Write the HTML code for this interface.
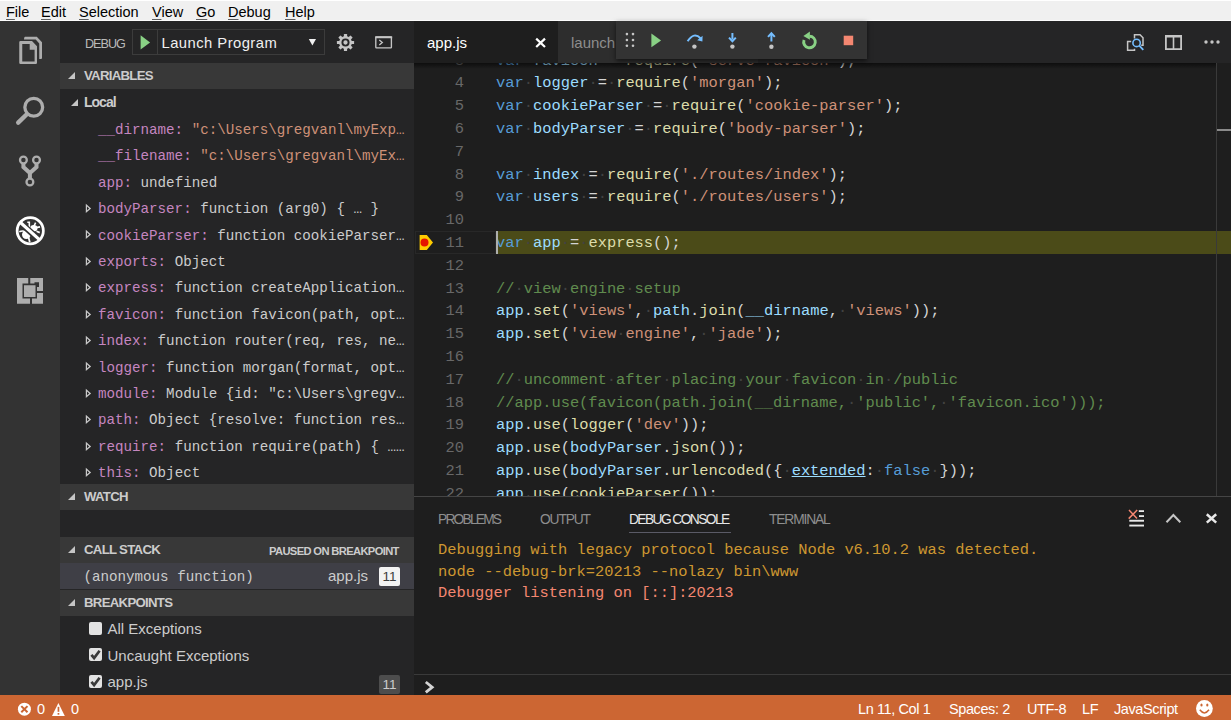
<!DOCTYPE html>
<html><head><meta charset="utf-8">
<style>
*{margin:0;padding:0;box-sizing:border-box}
html,body{width:1231px;height:720px;overflow:hidden;background:#1e1e1e;font-family:"Liberation Sans",sans-serif;position:relative}
.a{position:absolute}
#menubar{position:absolute;left:0;top:0;width:1231px;height:21px;background:#f0f0f0;border-top:1px solid #fff;border-bottom:1px solid #fcfcfc}
#menubar span{position:absolute;top:3px;font-size:14.5px;color:#000;line-height:17px;white-space:nowrap}
#menubar u{text-decoration:underline;text-decoration-thickness:1px;text-underline-offset:1.5px;text-decoration-color:#606060}
#activity{position:absolute;left:0;top:21px;width:60px;height:674px;background:#333333}
#activity svg{position:absolute}
#sidebar{position:absolute;left:60px;top:21px;width:354px;height:674px;background:#252526;overflow:hidden}
.dbghead{position:absolute;left:0;top:0;width:354px;height:42px}
.shead{position:absolute;left:0;width:354px;height:26.4px;background:#383838;color:#cccccc;font-weight:bold;font-size:13.2px}
.shead .t{position:absolute;left:24px;top:5px;line-height:16px;white-space:nowrap;letter-spacing:-0.7px}
.tri{position:absolute;left:8px;top:9px;width:0;height:0;border-left:7px solid transparent;border-bottom:7px solid #c5c5c5}
.row{position:absolute;left:0;width:354px;height:26.4px;font-family:"Liberation Mono",monospace;font-size:14.2px;color:#cccccc;white-space:pre}
.row .t{position:absolute;top:6.3px;line-height:16px}
.nm{color:#c586c0}.str{color:#ce9178}
.chev{position:absolute;left:25px;top:8px;width:8px;height:12px}
#editor{position:absolute;left:414px;top:21px;width:817px;height:674px;background:#1e1e1e;overflow:hidden}
#tabs{position:absolute;left:0;top:0;width:817px;height:42px;background:#252526}
.code{position:absolute;left:0;top:42px;width:817px;height:433px;overflow:hidden}
.ln{position:absolute;left:0;width:817px;height:22.8px;font-family:"Liberation Mono",monospace;font-size:15.4px;line-height:22.8px;white-space:pre;color:#d4d4d4}
.ln .n{position:absolute;right:767px;top:1px;color:#686868}
.ln .c{position:absolute;left:82px;top:1px}
.k{color:#569cd6}.v{color:#9cdcfe}.f{color:#dcdcaa}.s{color:#ce9178}.cm{color:#608b4e}.w{color:#424242}
.u{color:#9cdcfe;text-decoration:underline}
.curline{position:absolute;left:82px;width:735px;height:22.8px;background:#4b4b18}
.curgut{position:absolute;left:1px;width:81px;height:22.8px;border:1.5px solid #282828}
.cursor{position:absolute;left:82px;width:2px;height:22.8px;background:#aeafad}
.bp{position:absolute;left:6px;margin-top:5px;width:13px;height:13px}
#panel{position:absolute;left:0;top:475px;width:817px;height:199px;background:#1e1e1e;border-top:1px solid #454545}
#status{position:absolute;left:0;top:695px;width:1231px;height:25px;background:#cc6633;color:#fff;font-size:14.5px;letter-spacing:-0.4px}
#status span{position:absolute;top:6px;line-height:16px;white-space:nowrap}

.ui{font-family:"Liberation Sans",sans-serif;font-size:15px;color:#cccccc}
.row.ui .t{line-height:17px}
.cb{position:absolute;left:29px;width:13px;height:13px;background:#e3e3e3;border-radius:2px}
.cb svg{position:absolute;left:0;top:0}
.ptab{position:absolute;top:14.5px;font-size:13.8px;letter-spacing:-1.15px;line-height:16px;color:#8e8e8e;white-space:nowrap}
.ptab.act{color:#e7e7e7}
.con{position:absolute;left:24px;font-family:"Liberation Mono",monospace;font-size:15.4px;line-height:21.5px;white-space:pre}
.codeshadow{position:absolute;left:0;top:42px;width:802px;height:6px;background:linear-gradient(rgba(0,0,0,.55),rgba(0,0,0,0))}
#debugtb{position:absolute;left:616px;top:21px;width:251px;height:37.5px;background:#333333;box-shadow:0 2px 5px rgba(0,0,0,.6)}

</style></head><body>
<div id="menubar">
<span style="left:6px"><u>F</u>ile</span>
<span style="left:41px"><u>E</u>dit</span>
<span style="left:79px"><u>S</u>election</span>
<span style="left:152px"><u>V</u>iew</span>
<span style="left:196px"><u>G</u>o</span>
<span style="left:228px"><u>D</u>ebug</span>
<span style="left:285px"><u>H</u>elp</span>
</div>
<div id="activity"></div>
<div id="sidebar">
 <div class="dbghead">
  <div class="a" style="left:25px;top:16px;font-size:12.6px;line-height:14px;color:#bbbbbb;letter-spacing:-1px">DEBUG</div>
  <div class="a" style="left:72px;top:8px;width:193px;height:26px;border:1px solid #3c3c3c"></div>
  <div class="a" style="left:97px;top:8px;width:1px;height:26px;background:#3c3c3c"></div>
  <div class="a" style="left:101.5px;top:14.4px;font-size:14.8px;letter-spacing:0.45px;line-height:17px;color:#f0f0f0;white-space:nowrap">Launch Program</div>
 </div>
 <div class="shead" style="top:42px"><div class="tri"></div><div class="t">VARIABLES</div></div>
 <div class="row" style="top:68.4px;font-family:'Liberation Sans',sans-serif;font-weight:bold;font-size:14px"><div class="tri" style="left:11px;top:9.5px;border-left-width:7.2px;border-bottom-width:7.2px"></div><div class="t" style="left:24px;top:4.5px;letter-spacing:-1px">Local</div></div>
 <div class="row" style="top:94.8px"><div class="t" style="left:38px"><span class="nm">__dirname:</span> <span class="str">"c:\Users\gregvanl\myExp…</span></div></div>
 <div class="row" style="top:121.2px"><div class="t" style="left:38px"><span class="nm">__filename:</span> <span class="str">"c:\Users\gregvanl\myEx…</span></div></div>
 <div class="row" style="top:147.6px"><div class="t" style="left:38px"><span class="nm">app:</span> undefined</div></div>
 <div class="row" style="top:174px"><svg class="chev" viewBox="0 0 8 12"><path d="M0.8 0.8 L6.1 5.45 L0.8 10.1 Z M2 3.6 V7.3 L4.1 5.45 Z" fill="#c8c8c8" fill-rule="evenodd"/></svg><div class="t" style="left:38px"><span class="nm">bodyParser:</span> function (arg0) { … }</div></div>
 <div class="row" style="top:200.4px"><svg class="chev" viewBox="0 0 8 12"><path d="M0.8 0.8 L6.1 5.45 L0.8 10.1 Z M2 3.6 V7.3 L4.1 5.45 Z" fill="#c8c8c8" fill-rule="evenodd"/></svg><div class="t" style="left:38px"><span class="nm">cookieParser:</span> function cookieParser…</div></div>
 <div class="row" style="top:226.8px"><svg class="chev" viewBox="0 0 8 12"><path d="M0.8 0.8 L6.1 5.45 L0.8 10.1 Z M2 3.6 V7.3 L4.1 5.45 Z" fill="#c8c8c8" fill-rule="evenodd"/></svg><div class="t" style="left:38px"><span class="nm">exports:</span> Object</div></div>
 <div class="row" style="top:253.2px"><svg class="chev" viewBox="0 0 8 12"><path d="M0.8 0.8 L6.1 5.45 L0.8 10.1 Z M2 3.6 V7.3 L4.1 5.45 Z" fill="#c8c8c8" fill-rule="evenodd"/></svg><div class="t" style="left:38px"><span class="nm">express:</span> function createApplication…</div></div>
 <div class="row" style="top:279.6px"><svg class="chev" viewBox="0 0 8 12"><path d="M0.8 0.8 L6.1 5.45 L0.8 10.1 Z M2 3.6 V7.3 L4.1 5.45 Z" fill="#c8c8c8" fill-rule="evenodd"/></svg><div class="t" style="left:38px"><span class="nm">favicon:</span> function favicon(path, opt…</div></div>
 <div class="row" style="top:306px"><svg class="chev" viewBox="0 0 8 12"><path d="M0.8 0.8 L6.1 5.45 L0.8 10.1 Z M2 3.6 V7.3 L4.1 5.45 Z" fill="#c8c8c8" fill-rule="evenodd"/></svg><div class="t" style="left:38px"><span class="nm">index:</span> function router(req, res, ne…</div></div>
 <div class="row" style="top:332.4px"><svg class="chev" viewBox="0 0 8 12"><path d="M0.8 0.8 L6.1 5.45 L0.8 10.1 Z M2 3.6 V7.3 L4.1 5.45 Z" fill="#c8c8c8" fill-rule="evenodd"/></svg><div class="t" style="left:38px"><span class="nm">logger:</span> function morgan(format, opt…</div></div>
 <div class="row" style="top:358.8px"><svg class="chev" viewBox="0 0 8 12"><path d="M0.8 0.8 L6.1 5.45 L0.8 10.1 Z M2 3.6 V7.3 L4.1 5.45 Z" fill="#c8c8c8" fill-rule="evenodd"/></svg><div class="t" style="left:38px"><span class="nm">module:</span> Module {id: "c:\Users\gregv…</div></div>
 <div class="row" style="top:385.2px"><svg class="chev" viewBox="0 0 8 12"><path d="M0.8 0.8 L6.1 5.45 L0.8 10.1 Z M2 3.6 V7.3 L4.1 5.45 Z" fill="#c8c8c8" fill-rule="evenodd"/></svg><div class="t" style="left:38px"><span class="nm">path:</span> Object {resolve: function res…</div></div>
 <div class="row" style="top:411.6px"><svg class="chev" viewBox="0 0 8 12"><path d="M0.8 0.8 L6.1 5.45 L0.8 10.1 Z M2 3.6 V7.3 L4.1 5.45 Z" fill="#c8c8c8" fill-rule="evenodd"/></svg><div class="t" style="left:38px"><span class="nm">require:</span> function require(path) { ……</div></div>
 <div class="row" style="top:438px"><svg class="chev" viewBox="0 0 8 12"><path d="M0.8 0.8 L6.1 5.45 L0.8 10.1 Z M2 3.6 V7.3 L4.1 5.45 Z" fill="#c8c8c8" fill-rule="evenodd"/></svg><div class="t" style="left:38px"><span class="nm">this:</span> Object</div></div>
 <div class="shead" style="top:463px"><div class="tri"></div><div class="t">WATCH</div></div>
 <div class="shead" style="top:516px"><div class="tri"></div><div class="t">CALL STACK</div><div class="a" style="left:209px;top:7px;font-size:11.2px;line-height:14px;white-space:nowrap;letter-spacing:-0.65px">PAUSED ON BREAKPOINT</div></div>
 <div class="row" style="top:542px;background:#3f3f46"><div class="t" style="left:23.5px">(anonymous function)</div>
   <div class="a ui" style="left:268px;top:4px;font-size:15px;line-height:17px">app.js</div>
   <div class="a ui badge" style="left:319px;top:4px;width:21px;height:19px;background:#f2f2f2;color:#3c3c3c;font-size:13.5px;line-height:19px;text-align:center;border-radius:2px">11</div>
 </div>
 <div class="shead" style="top:569px"><div class="tri"></div><div class="t">BREAKPOINTS</div></div>
 <div class="row ui" style="top:595px"><div class="cb" style="top:5.5px"></div><div class="t" style="left:47.5px;top:4px">All Exceptions</div></div>
 <div class="row ui" style="top:621.5px"><div class="cb" style="top:5.5px"><svg width="13" height="13"><path d="M2.4 6.9 L5.1 10 L10.6 2.8" stroke="#3a3a3a" stroke-width="2.7" fill="none"/></svg></div><div class="t" style="left:47.5px;top:4px">Uncaught Exceptions</div></div>
 <div class="row ui" style="top:648px"><div class="cb" style="top:5.5px"><svg width="13" height="13"><path d="M2.4 6.9 L5.1 10 L10.6 2.8" stroke="#3a3a3a" stroke-width="2.7" fill="none"/></svg></div><div class="t" style="left:47.5px;top:4px">app.js</div>
   <div class="a badge" style="left:319px;top:6px;width:21px;height:19px;background:#4d4d4d;color:#cccccc;font-size:13.5px;line-height:19px;text-align:center;border-radius:2px">11</div></div>
</div>
<div id="editor">
 <div id="tabs">
  <div class="a" style="left:0;top:0;width:144px;height:42px;background:#1e1e1e"></div>
  <div class="a" style="left:13px;top:13px;font-size:15px;line-height:17px;color:#ffffff">app.js</div>
  <div class="a" style="left:144px;top:0;width:200px;height:42px;background:#2d2d2d"></div>
  <div class="a" style="left:157px;top:13px;font-size:15px;line-height:17px;color:#8e8e8e">launch.json</div>
 </div>
 <div class="code">
<div class="curline" style="top:168.00px"></div>
<div class="curgut" style="top:168.00px"></div>
<div class="ln" style="top:-14.40px"><span class="n">3</span><span class="c"><span class="k">var</span><span class="w">·</span><span class="v">favicon</span><span class="w">·</span>=<span class="w">·</span><span class="f">require</span>(<span class="s">&#x27;serve-favicon&#x27;</span>);</span></div>
<div class="ln" style="top:8.40px"><span class="n">4</span><span class="c"><span class="k">var</span><span class="w">·</span><span class="v">logger</span><span class="w">·</span>=<span class="w">·</span><span class="f">require</span>(<span class="s">&#x27;morgan&#x27;</span>);</span></div>
<div class="ln" style="top:31.20px"><span class="n">5</span><span class="c"><span class="k">var</span><span class="w">·</span><span class="v">cookieParser</span><span class="w">·</span>=<span class="w">·</span><span class="f">require</span>(<span class="s">&#x27;cookie-parser&#x27;</span>);</span></div>
<div class="ln" style="top:54.00px"><span class="n">6</span><span class="c"><span class="k">var</span><span class="w">·</span><span class="v">bodyParser</span><span class="w">·</span>=<span class="w">·</span><span class="f">require</span>(<span class="s">&#x27;body-parser&#x27;</span>);</span></div>
<div class="ln" style="top:76.80px"><span class="n">7</span><span class="c"></span></div>
<div class="ln" style="top:99.60px"><span class="n">8</span><span class="c"><span class="k">var</span><span class="w">·</span><span class="v">index</span><span class="w">·</span>=<span class="w">·</span><span class="f">require</span>(<span class="s">&#x27;./routes/index&#x27;</span>);</span></div>
<div class="ln" style="top:122.40px"><span class="n">9</span><span class="c"><span class="k">var</span><span class="w">·</span><span class="v">users</span><span class="w">·</span>=<span class="w">·</span><span class="f">require</span>(<span class="s">&#x27;./routes/users&#x27;</span>);</span></div>
<div class="ln" style="top:145.20px"><span class="n">10</span><span class="c"></span></div>
<div class="ln" style="top:168.00px"><span class="n">11</span><span class="c"><span class="k">var</span><span class="w">·</span><span class="v">app</span><span class="w">·</span>=<span class="w">·</span><span class="f">express</span>();</span></div>
<div class="ln" style="top:190.80px"><span class="n">12</span><span class="c"></span></div>
<div class="ln" style="top:213.60px"><span class="n">13</span><span class="c"><span class="cm">//</span><span class="w">·</span><span class="cm">view</span><span class="w">·</span><span class="cm">engine</span><span class="w">·</span><span class="cm">setup</span></span></div>
<div class="ln" style="top:236.40px"><span class="n">14</span><span class="c"><span class="v">app</span>.<span class="f">set</span>(<span class="s">&#x27;views&#x27;</span>,<span class="w">·</span><span class="v">path</span>.<span class="f">join</span>(<span class="v">__dirname</span>,<span class="w">·</span><span class="s">&#x27;views&#x27;</span>));</span></div>
<div class="ln" style="top:259.20px"><span class="n">15</span><span class="c"><span class="v">app</span>.<span class="f">set</span>(<span class="s">&#x27;view</span><span class="w">·</span><span class="s">engine&#x27;</span>,<span class="w">·</span><span class="s">&#x27;jade&#x27;</span>);</span></div>
<div class="ln" style="top:282.00px"><span class="n">16</span><span class="c"></span></div>
<div class="ln" style="top:304.80px"><span class="n">17</span><span class="c"><span class="cm">//</span><span class="w">·</span><span class="cm">uncomment</span><span class="w">·</span><span class="cm">after</span><span class="w">·</span><span class="cm">placing</span><span class="w">·</span><span class="cm">your</span><span class="w">·</span><span class="cm">favicon</span><span class="w">·</span><span class="cm">in</span><span class="w">·</span><span class="cm">/public</span></span></div>
<div class="ln" style="top:327.60px"><span class="n">18</span><span class="c"><span class="cm">//app.use(favicon(path.join(__dirname,</span><span class="w">·</span><span class="cm">&#x27;public&#x27;,</span><span class="w">·</span><span class="cm">&#x27;favicon.ico&#x27;)));</span></span></div>
<div class="ln" style="top:350.40px"><span class="n">19</span><span class="c"><span class="v">app</span>.<span class="f">use</span>(<span class="f">logger</span>(<span class="s">&#x27;dev&#x27;</span>));</span></div>
<div class="ln" style="top:373.20px"><span class="n">20</span><span class="c"><span class="v">app</span>.<span class="f">use</span>(<span class="v">bodyParser</span>.<span class="f">json</span>());</span></div>
<div class="ln" style="top:396.00px"><span class="n">21</span><span class="c"><span class="v">app</span>.<span class="f">use</span>(<span class="v">bodyParser</span>.<span class="f">urlencoded</span>({<span class="w">·</span><span class="u">extended</span>:<span class="w">·</span><span class="k">false</span><span class="w">·</span>}));</span></div>
<div class="ln" style="top:418.80px"><span class="n">22</span><span class="c"><span class="v">app</span>.<span class="f">use</span>(<span class="f">cookieParser</span>());</span></div>
<div class="cursor" style="top:168.00px"></div>
<div class="bp" style="top:168.00px"></div>
 </div>
 <div class="codeshadow"></div>
 <div class="a" style="left:802px;top:42px;width:1px;height:433px;background:#3a3a3a"></div>
 <div class="a" style="left:803px;top:108px;width:14px;height:2px;background:#8a8a8a"></div>
 <div id="panel">
  <div class="ptab" style="left:24px;letter-spacing:-1.8px">PROBLEMS</div>
  <div class="ptab" style="left:126px">OUTPUT</div>
  <div class="ptab act" style="left:215px;letter-spacing:-1.6px">DEBUG CONSOLE</div>
  <div class="ptab" style="left:355px">TERMINAL</div>
  <div class="a" style="left:215px;top:35px;width:102px;height:1.2px;background:#5a5a66"></div>
  <div class="con" style="top:43px;color:#cd9731">Debugging with legacy protocol because Node v6.10.2 was detected.</div>
  <div class="con" style="top:64.5px;color:#cd9731">node --debug-brk=20213 --nolazy bin\www</div>
  <div class="con" style="top:86px;color:#f48771">Debugger listening on [::]:20213</div>
  <div class="a" style="left:0;top:177px;width:817px;height:1px;background:#3a3a3a"></div>
 </div>
</div>
<div id="debugtb"></div>
<div id="status">
 <span style="left:37px">0</span>
 <span style="left:71px">0</span>
 <span style="left:858px">Ln 11, Col 1</span>
 <span style="left:949px">Spaces: 2</span>
 <span style="left:1027px">UTF-8</span>
 <span style="left:1082px">LF</span>
 <span style="left:1114px">JavaScript</span>
</div>
<svg class="a" style="left:0;top:0" width="1231" height="720" viewBox="0 0 1231 720">
 <!-- explorer -->
 <g fill="#adadad">
  <path fill-rule="evenodd" d="M20.2 41 H32 L37 46.3 V62.8 Q37 64 35.8 64 H20.5 Q19.25 64 19.25 62.8 V42.2 Q19.25 41 20.5 41 Z M22.25 44 H29.7 V49.8 H34.6 V61.4 H22.25 Z"/>
  <path d="M25 36.75 H36.8 L42 42.3 V58 Q42 59 41 59 H39.25 V43.4 L35.7 39.4 H24 Q24 36.75 25 36.75 Z"/>
 </g>
 <!-- search -->
 <g stroke="#adadad" fill="none">
  <circle cx="33.75" cy="107.25" r="8.9" stroke-width="3.3"/>
  <line x1="18.2" y1="122.6" x2="26.8" y2="114.2" stroke-width="4.4" stroke-linecap="round"/>
 </g>
 <!-- git -->
 <g stroke="#adadad" fill="none">
  <circle cx="23.4" cy="160" r="3.4" stroke-width="2.3"/>
  <circle cx="36.5" cy="160" r="3.4" stroke-width="2.3"/>
  <circle cx="29.9" cy="182" r="3.4" stroke-width="2.3"/>
  <path d="M23.4 163 V167 L29.9 173 L36.5 167 V163 M29.9 173 V179" stroke-width="4" stroke-linejoin="miter"/>
 </g>
 <!-- debug (active) -->
 <defs>
  <mask id="bugmask"><rect x="0" y="200" width="60" height="60" fill="#fff"/><line x1="15" y1="218" x2="44" y2="244" stroke="#000" stroke-width="6.2"/></mask>
 </defs>
 <circle cx="30.25" cy="230.75" r="13.1" stroke="#fff" stroke-width="2.75" fill="none"/>
 <line x1="19.6" y1="221.8" x2="39.4" y2="239.6" stroke="#fff" stroke-width="3.2"/>
 <g mask="url(#bugmask)" fill="#fff" stroke="#fff">
  <ellipse cx="33.8" cy="228.2" rx="3.6" ry="3.3" stroke="none"/>
  <path d="M27.3 222.2 H29.3 V227.5" stroke-width="1.6" fill="none"/>
  <path d="M35.6 222.6 L33.8 226.5" stroke-width="1.6" fill="none"/>
  <path d="M36 227.6 L40 226.8" stroke-width="1.7" fill="none"/>
  <path d="M36.5 231.2 L39.8 232.6" stroke-width="1.7" fill="none"/>
  <ellipse cx="26.3" cy="234.6" rx="4.3" ry="4.3" stroke="none"/>
  <path d="M19.3 231.8 Q21.5 230.6 24.5 231.2" stroke-width="1.6" fill="none"/>
  <path d="M28.6 237.5 L29.8 242.2" stroke-width="1.7" fill="none"/>
 </g>
 <!-- extensions -->
 <g>
  <rect x="17" y="278" width="26" height="25.75" fill="#adadad"/>
  <g fill="#333333">
   <rect x="28.25" y="278" width="2" height="6"/>
   <rect x="30" y="298" width="2" height="6"/>
   <rect x="37" y="291" width="6" height="2"/>
   <rect x="22.5" y="283.5" width="14.5" height="15"/>
   <rect x="34.5" y="282.25" width="4.5" height="4.75"/>
  </g>
  <rect x="24" y="285.25" width="11.5" height="11.75" fill="#adadad"/>
 </g>
 <!-- sidebar header: play, dropdown arrow, gear, console -->
 <path d="M140.6 35.3 L150.1 42.45 L140.6 49.6 Z" fill="#89d185"/>
 <path d="M308.8 39 H316 L312.4 45.5 Z" fill="#f0f0f0"/>
 <g transform="translate(345.5 42.5)" fill="#c5c5c5">
  <circle r="6.4"/><rect x="-1.6" y="-8.6" width="3.2" height="4" rx="0.5" transform="rotate(0)"/><rect x="-1.6" y="-8.6" width="3.2" height="4" rx="0.5" transform="rotate(45)"/><rect x="-1.6" y="-8.6" width="3.2" height="4" rx="0.5" transform="rotate(90)"/><rect x="-1.6" y="-8.6" width="3.2" height="4" rx="0.5" transform="rotate(135)"/><rect x="-1.6" y="-8.6" width="3.2" height="4" rx="0.5" transform="rotate(180)"/><rect x="-1.6" y="-8.6" width="3.2" height="4" rx="0.5" transform="rotate(225)"/><rect x="-1.6" y="-8.6" width="3.2" height="4" rx="0.5" transform="rotate(270)"/><rect x="-1.6" y="-8.6" width="3.2" height="4" rx="0.5" transform="rotate(315)"/>
  <circle r="3.1" fill="none" stroke="#252526" stroke-width="1.9"/>
 </g>
 <g stroke="#c5c5c5" fill="none">
  <rect x="375.8" y="37" width="15.6" height="10.9" stroke-width="1.35" rx="0.6"/>
  <line x1="375.2" y1="37.3" x2="392.2" y2="37.3" stroke-width="1.9"/>
  <path d="M379.3 40 L382.3 42.5 L379.3 45" stroke-width="1.3"/>
 </g>
 <!-- tab close -->
 <path d="M536.2 38.6 L545 47 M545 38.6 L536.2 47" stroke="#ffffff" stroke-width="2.2"/>
 <!-- editor actions -->
 <g fill="none" stroke="#c5c5c5" stroke-width="1.5">
  <path d="M1134.5 38.5 V34.8 H1140 L1143 37.8 V45.3 H1141.2"/>
  <path d="M1131.2 41.6 H1127.6 V50.3 H1134.5 V48.8"/>
 </g>
 <g fill="none" stroke="#75beff">
  <circle cx="1136.6" cy="42.9" r="3.7" stroke-width="1.6"/>
  <line x1="1139.3" y1="45.6" x2="1143.3" y2="49.8" stroke-width="1.8"/>
 </g>
 <g fill="#c5c5c5">
  <path fill-rule="evenodd" d="M1165 34.9 H1182 V50 H1165 Z M1166.8 37.6 V48.3 H1172.7 V37.6 Z M1174.3 37.6 V48.3 H1180.2 V37.6 Z"/>
  <circle cx="1206" cy="42" r="1.7"/><circle cx="1212" cy="42" r="1.7"/><circle cx="1218" cy="42" r="1.7"/>
 </g>
 <!-- breakpoint glyph -->
 <path d="M419.6 235 H426.8 L433 242.5 L426.8 250 H419.6 Z" fill="#ffcc00"/>
 <circle cx="424.5" cy="242.5" r="4" fill="#e51400"/>
 <!-- debug toolbar -->
 <g fill="#c5c5c5">
  <circle cx="626.9" cy="34.1" r="1.3"/><circle cx="633" cy="34.1" r="1.3"/>
  <circle cx="626.9" cy="40" r="1.3"/><circle cx="633" cy="40" r="1.3"/>
  <circle cx="626.9" cy="45.8" r="1.3"/><circle cx="633" cy="45.8" r="1.3"/>
 </g>
 <path d="M651.4 33.6 L661.1 40.45 L651.4 47.3 Z" fill="#89d185"/>
 <g fill="none" stroke="#75beff" stroke-width="2">
  <path d="M687.6 41.3 Q694 31.5 700.5 38.2"/>
 </g>
 <path d="M697.2 40.2 L702.4 41.5 L702.6 35.8 Z" fill="#75beff"/>
 <circle cx="694.4" cy="46.6" r="2.2" fill="#c5c5c5"/>
 <g stroke="#75beff" stroke-width="2" fill="none">
  <line x1="732.4" y1="33" x2="732.4" y2="39.5"/>
  <path d="M729 37.6 L732.4 41.3 L735.8 37.6"/>
  <line x1="771.4" y1="41.5" x2="771.4" y2="35"/>
  <path d="M768 36.9 L771.4 33.2 L774.8 36.9"/>
 </g>
 <circle cx="732.4" cy="46.6" r="2.2" fill="#c5c5c5"/>
 <circle cx="771.4" cy="46.8" r="2.2" fill="#c5c5c5"/>
 <path d="M809.5 36.2 A5.8 5.8 0 1 1 804.05 40.0" fill="none" stroke="#89d185" stroke-width="2.9"/>
 <path d="M803.4 36 L809.9 31.4 L809.9 39.8 Z" fill="#89d185"/>
 <rect x="843.7" y="35.7" width="9.5" height="9.5" fill="#f48771"/>
 <!-- panel actions -->
 <g fill="#e8e8e8">
  <rect x="1138.8" y="510.2" width="5.2" height="1.8"/>
  <rect x="1139" y="515.2" width="5" height="1.8"/>
  <rect x="1129.3" y="519.8" width="14.7" height="1.9"/>
  <rect x="1129.3" y="524.6" width="14.7" height="1.9"/>
 </g>
 <path d="M1128.7 518.6 L1137.2 510 M1129 510 L1137 518.4" stroke="#f48771" stroke-width="1.5"/>
 <path d="M1166.5 522.3 L1173.4 515 L1180.3 522.3" stroke="#c5c5c5" stroke-width="2" fill="none"/>
 <path d="M1206.8 514.2 L1216.2 522.6 M1216.2 514.2 L1206.8 522.6" stroke="#e8e8e8" stroke-width="2.5"/>
 <!-- console prompt -->
 <path d="M425.8 682 L432.2 687.2 L425.8 692.4" stroke="#d4d4d4" stroke-width="2.8" fill="none"/>
 <!-- status icons -->
 <circle cx="24.4" cy="709.2" r="6.5" fill="#ffffff"/>
 <path d="M21.3 706.1 L27.5 712.3 M27.5 706.1 L21.3 712.3" stroke="#cc6633" stroke-width="2"/>
 <path d="M58.4 702.9 L64.8 716 H52 Z" fill="#ffffff"/>
 <rect x="57.6" y="706.8" width="1.7" height="5" fill="#cc6633"/>
 <rect x="57.6" y="713" width="1.7" height="1.7" fill="#cc6633"/>
 <circle cx="1204.4" cy="708.5" r="8.4" fill="#ffffff"/>
 <ellipse cx="1201.5" cy="705" rx="1.1" ry="1.6" fill="#cc6633"/>
 <ellipse cx="1207.3" cy="705" rx="1.1" ry="1.6" fill="#cc6633"/>
 <path d="M1199.8 709.8 Q1204.4 716 1209 709.8" stroke="#cc6633" stroke-width="1.5" fill="none"/>
</svg>


</body></html>
